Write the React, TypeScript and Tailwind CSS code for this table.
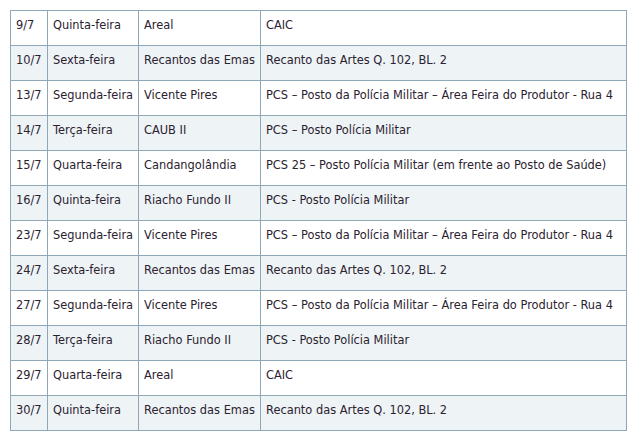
const rows: [string, string, string, string][] = [
  ['9/7', 'Quinta-feira', 'Areal', 'CAIC'],
  ['10/7', 'Sexta-feira', 'Recantos das Emas', 'Recanto das Artes Q. 102, BL. 2'],
  ['13/7', 'Segunda-feira', 'Vicente Pires', 'PCS – Posto da Polícia Militar – Área Feira do Produtor - Rua 4'],
  ['14/7', 'Terça-feira', 'CAUB II', 'PCS – Posto Polícia Militar'],
  ['15/7', 'Quarta-feira', 'Candangolândia', 'PCS 25 – Posto Polícia Militar (em frente ao Posto de Saúde)'],
  ['16/7', 'Quinta-feira', 'Riacho Fundo II', 'PCS - Posto Polícia Militar'],
  ['23/7', 'Segunda-feira', 'Vicente Pires', 'PCS – Posto da Polícia Militar – Área Feira do Produtor - Rua 4'],
  ['24/7', 'Sexta-feira', 'Recantos das Emas', 'Recanto das Artes Q. 102, BL. 2'],
  ['27/7', 'Segunda-feira', 'Vicente Pires', 'PCS – Posto da Polícia Militar – Área Feira do Produtor - Rua 4'],
  ['28/7', 'Terça-feira', 'Riacho Fundo II', 'PCS - Posto Polícia Militar'],
  ['29/7', 'Quarta-feira', 'Areal', 'CAIC'],
  ['30/7', 'Quinta-feira', 'Recantos das Emas', 'Recanto das Artes Q. 102, BL. 2'],
];

const widths = ['w-[37px]', 'w-[91px]', 'w-[122px]', 'w-[366px]'];

export default function App() {
  return (
    <div className="w-[634px] h-[441px] bg-white pt-[10px] pl-[10px] font-['DejaVu_Sans',Verdana,sans-serif] text-[11.4px] text-[#2b2230]">
      <table className="border-collapse table-fixed w-[617px]">
        <tbody>
          {rows.map((r, i) => (
            <tr key={i} className={i % 2 === 1 ? 'bg-[#eef3f6]' : 'bg-white'}>
              {r.map((c, j) => (
                <td
                  key={j}
                  className={`${widths[j]} h-[35px] border border-[#8ea8b9] align-top pl-[5px] pt-[7px] leading-[14px] whitespace-nowrap overflow-hidden`}
                >
                  {c}
                </td>
              ))}
            </tr>
          ))}
        </tbody>
      </table>
    </div>
  );
}
